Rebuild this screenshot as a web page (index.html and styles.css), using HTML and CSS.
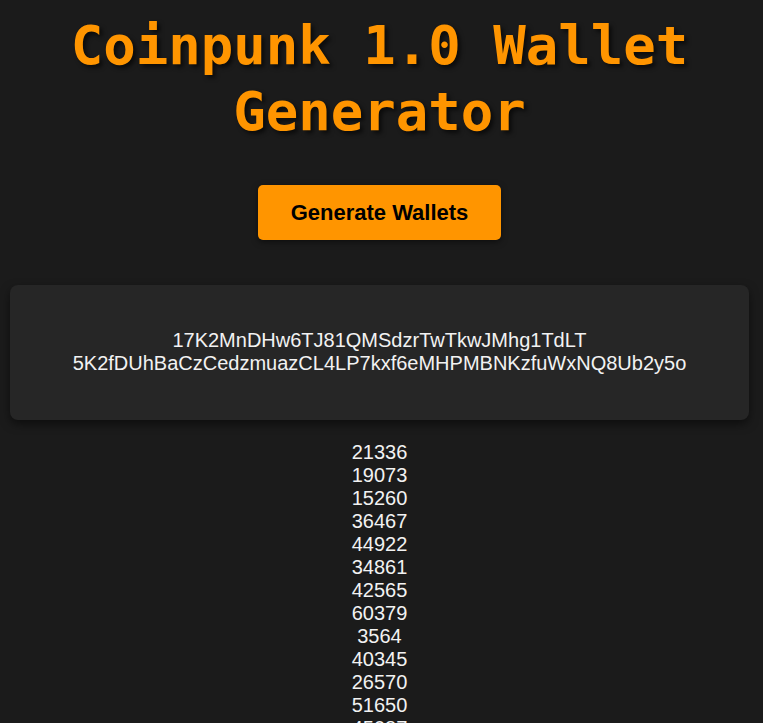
FILE: index.html
```html
<!DOCTYPE html>
<html lang="en">
<head>
<meta charset="utf-8">
<title>Coinpunk 1.0 Wallet Generator</title>
<link rel="stylesheet" href="styles.css">
</head>
<body>
<main class="page">
  <h1 class="title">Coinpunk 1.0 Wallet Generator</h1>
  <div class="actions">
    <button class="generate" type="button">Generate Wallets</button>
  </div>
  <section class="wallet-card">
    <div class="wallet-line">17K2MnDHw6TJ81QMSdzrTwTkwJMhg1TdLT</div>
    <div class="wallet-line">5K2fDUhBaCzCedzmuazCL4LP7kxf6eMHPMBNKzfuWxNQ8Ub2y5o</div>
  </section>
  <ul class="numbers">
    <li>21336</li>
    <li>19073</li>
    <li>15260</li>
    <li>36467</li>
    <li>44922</li>
    <li>34861</li>
    <li>42565</li>
    <li>60379</li>
    <li>3564</li>
    <li>40345</li>
    <li>26570</li>
    <li>51650</li>
    <li>45087</li>
    <li>12948</li>
    <li>30512</li>
  </ul>
</main>
</body>
</html>
```

FILE: styles.css
```css
html, body {
  margin: 0;
  padding: 0;
  background: #1b1b1b;
}

.page {
  padding: 0 14px 0 10px;
  display: flex;
  flex-direction: column;
  align-items: stretch;
}

.title {
  margin: 13px 0 0;
  font-family: "DejaVu Sans Mono", "Liberation Mono", monospace;
  font-weight: bold;
  font-size: 54px;
  line-height: 66px;
  text-align: center;
  color: #ff9500;
  text-shadow: 3px 3px 4px rgba(0, 0, 0, 0.6);
}

.actions {
  display: flex;
  justify-content: center;
  margin-top: 40px;
}

.generate {
  font-family: "Liberation Sans", Arial, sans-serif;
  font-weight: bold;
  font-size: 22px;
  line-height: 23px;
  color: #000;
  background: #ff9500;
  border: none;
  border-radius: 5px;
  padding: 16px 33px;
  box-shadow: 0 2px 6px rgba(0, 0, 0, 0.5);
  cursor: pointer;
}

.wallet-card {
  margin-top: 45px;
  background: #262626;
  border-radius: 8px;
  padding: 44px 20px 45px;
  box-shadow: 0 4px 10px rgba(0, 0, 0, 0.5);
  text-align: center;
  font-family: "Liberation Sans Narrow", "Liberation Sans", Arial, sans-serif;
  font-size: 20px;
  line-height: 23px;
  color: #f2f2f2;
}

.numbers {
  list-style: none;
  margin: 21px 0 0;
  padding: 0;
  text-align: center;
  font-family: "Liberation Sans", Arial, sans-serif;
  font-size: 20px;
  line-height: 23px;
  color: #f2f2f2;
}
```
